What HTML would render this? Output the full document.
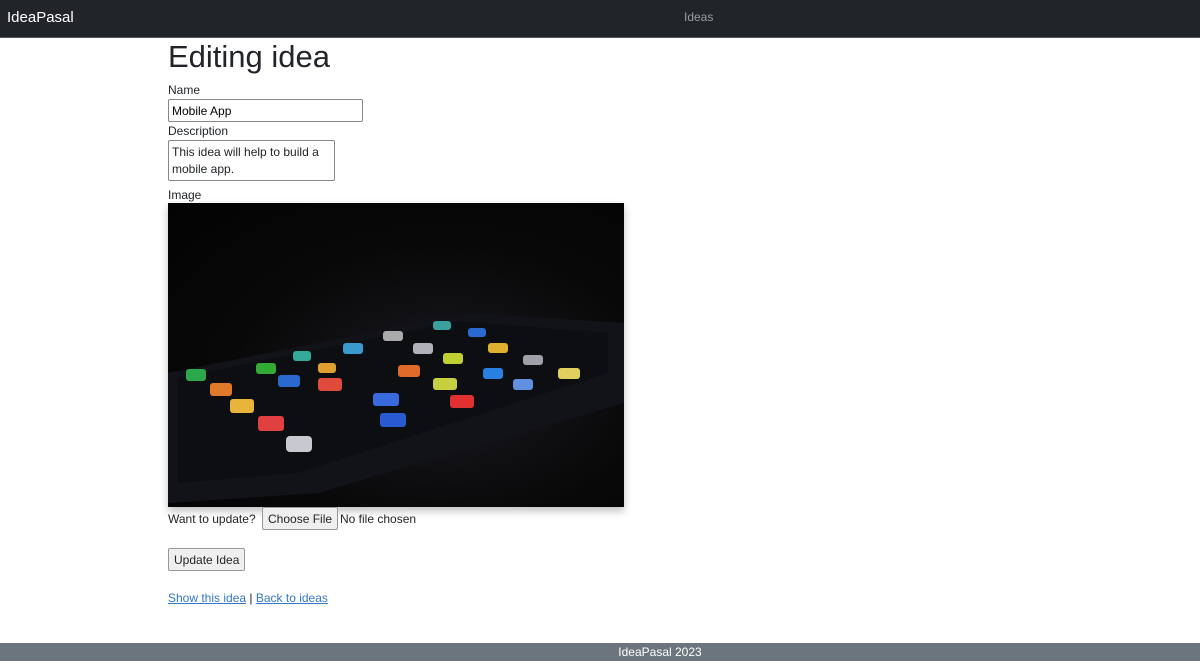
<!DOCTYPE html>
<html><head><meta charset="utf-8"><style>
*{box-sizing:border-box}
body{margin:0;width:1200px;height:671px;background:#fff;font-family:"Liberation Sans",sans-serif;color:#212529;position:relative;overflow:hidden;font-size:12px}
.nav{position:absolute;left:0;top:0;width:1200px;height:38px;background:#212529;border-bottom:1px solid #555}
.brand{position:absolute;left:7px;top:9px;color:#fff;font-size:15px}
.ideas{position:absolute;left:684px;top:10px;color:#9a9da0;font-size:12px}
.a{position:absolute}
h1{position:absolute;left:168px;top:39px;margin:0;font-size:31px;font-weight:500}
input.t{position:absolute;left:168px;top:99px;width:195px;height:23px;border:1px solid #888;border-radius:2px;font:12px "Liberation Sans",sans-serif;padding:1px 3px}
.ta{position:absolute;left:168px;top:140px;width:167px;height:41px;border:1px solid #888;border-radius:2px;padding:3px 10px 0 3px;line-height:17px;font-size:12px}
.img{position:absolute;left:168px;top:203px;width:456px;height:304px;overflow:hidden;background:radial-gradient(ellipse at 60% 60%,#1a1a22 0%,#080808 55%,#030303 100%);box-shadow:0 4px 8px rgba(0,0,0,.25)}
.btn{position:absolute;border:1px solid #999;background:#efefef;border-radius:2px;font-size:12px;padding:4px 5px}
a{color:#3478c6}
.foot{position:absolute;left:0;top:643px;width:1200px;height:18px;background:#6c757d;color:#fff;text-align:center;font-size:12px;line-height:18px;padding-left:120px}
</style></head><body>
<div class="nav"><span class="brand">IdeaPasal</span><span class="ideas">Ideas</span></div>
<h1>Editing idea</h1>
<div class="a" style="left:168px;top:83px">Name</div>
<input class="t" value="Mobile App">
<div class="a" style="left:168px;top:124px">Description</div>
<div class="ta">This idea will help to build a mobile app.</div>
<div class="a" style="left:168px;top:188px">Image</div>
<div class="img">
<svg width="456" height="304" viewBox="0 0 456 304">
<polygon points="0,170 300,110 456,120 456,200 150,290 0,300" fill="#121318"/>
<polygon points="10,175 290,118 440,130 440,170 130,270 10,280" fill="#0d0e12"/>
<g>
<rect x="18" y="166" width="20" height="12" rx="3" fill="#2aa84a"/>
<rect x="42" y="180" width="22" height="13" rx="3" fill="#e07a2a"/>
<rect x="62" y="196" width="24" height="14" rx="3" fill="#e8b43a"/>
<rect x="90" y="213" width="26" height="15" rx="3" fill="#e04040"/>
<rect x="118" y="233" width="26" height="16" rx="4" fill="#c8c8d0"/>
<rect x="88" y="160" width="20" height="11" rx="3" fill="#3a3"/>
<rect x="110" y="172" width="22" height="12" rx="3" fill="#2a6ad0"/>
<rect x="150" y="175" width="24" height="13" rx="3" fill="#e04a3a"/>
<rect x="175" y="140" width="20" height="11" rx="3" fill="#3a9ad0"/>
<rect x="205" y="190" width="26" height="13" rx="3" fill="#3a6ae0"/>
<rect x="212" y="210" width="26" height="14" rx="3" fill="#2a5ad0"/>
<rect x="230" y="162" width="22" height="12" rx="3" fill="#e06a2a"/>
<rect x="265" y="175" width="24" height="12" rx="3" fill="#c8d040"/>
<rect x="282" y="192" width="24" height="13" rx="3" fill="#e03030"/>
<rect x="215" y="128" width="20" height="10" rx="3" fill="#aaa"/>
<rect x="245" y="140" width="20" height="11" rx="3" fill="#b0b0b8"/>
<rect x="275" y="150" width="20" height="11" rx="3" fill="#c0d030"/>
<rect x="315" y="165" width="20" height="11" rx="3" fill="#2a80e0"/>
<rect x="345" y="176" width="20" height="11" rx="3" fill="#6090e0"/>
<rect x="320" y="140" width="20" height="10" rx="3" fill="#e0b030"/>
<rect x="355" y="152" width="20" height="10" rx="3" fill="#a0a0a8"/>
<rect x="390" y="165" width="22" height="11" rx="3" fill="#e0d060"/>
<rect x="265" y="118" width="18" height="9" rx="3" fill="#3aa0a0"/>
<rect x="300" y="125" width="18" height="9" rx="3" fill="#2a6ad0"/>
<rect x="125" y="148" width="18" height="10" rx="3" fill="#3a9"/>
<rect x="150" y="160" width="18" height="10" rx="3" fill="#e0a030"/>
</g>
</svg>
</div>
<div class="a" style="left:168px;top:512px">Want to update?</div>
<div class="btn" style="left:262px;top:507px;height:23px">Choose File</div>
<div class="a" style="left:340px;top:512px">No file chosen</div>
<div class="btn" style="left:168px;top:548px;height:23px">Update Idea</div>
<div class="a" style="left:168px;top:591px"><a href="#">Show this idea</a> | <a href="#">Back to ideas</a></div>
<div class="foot">IdeaPasal 2023</div>
</body></html>
